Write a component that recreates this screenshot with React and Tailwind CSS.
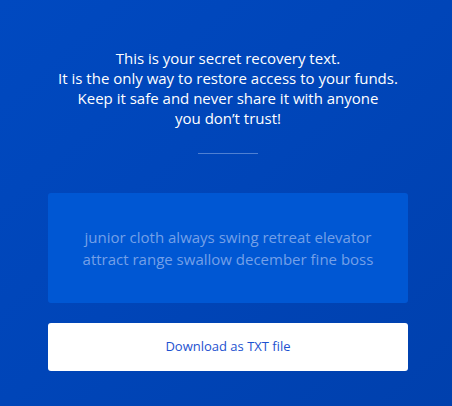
import React from "react";

const words = "junior cloth always swing retreat elevator attract range swallow december fine boss";

export default function App() {
  return (
    <div
      className="w-[452px] h-[406px] pl-[4px] bg-gradient-to-br from-[#0049c0] via-[#0045b8] to-[#0040ad] flex flex-col items-center"
      style={{ fontFamily: '"Open Sans", sans-serif' }}
    >
      <p className="mt-[48px] text-white text-[15px] leading-[20px] text-center">
        This is your secret recovery text.
        <br />
        It is the only way to restore access to your funds.
        <br />
        Keep it safe and never share it with anyone
        <br />
        you don’t trust!
      </p>
      <div className="mt-[25px] w-[60px] h-px bg-[#4f80d2]" />
      <div className="mt-[39px] w-[360px] h-[110px] rounded-[3px] bg-[#0057d3] flex items-center justify-center px-4">
        <p className="text-[15px] leading-[22px] font-medium text-[#74a0e8] text-center">{words}</p>
      </div>
      <button className="mt-[20px] w-[360px] h-[48px] rounded-[3px] bg-white text-[13px] font-medium text-[#1d52d0] flex items-center justify-center">
        Download as TXT file
      </button>
    </div>
  );
}
